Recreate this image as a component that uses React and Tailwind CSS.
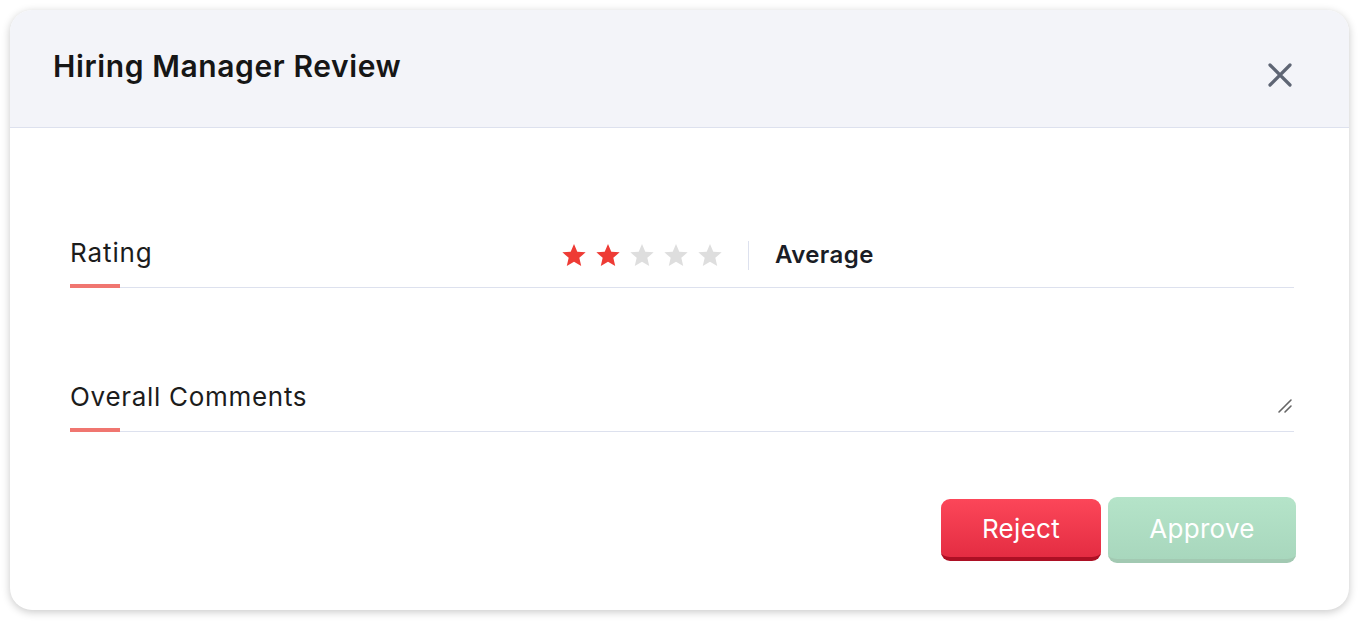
const Star = ({ filled }) => (
    <svg width="26" height="26" viewBox="0 0 24 24" className="shrink-0">
        <path
            d="M12 1.8l3.05 7.1 7.7.66-5.84 5.07 1.75 7.53L12 18.2l-6.66 3.96 1.75-7.53L1.25 9.56l7.7-.66z"
            fill={filled ? "#ee3b35" : "#dedede"}
        />
    </svg>
);

export default function App() {
    const rating = 2;

    return (
        <div className="w-[1363px] h-[624px] bg-white p-[10px] font-['Inter','Noto_Sans',sans-serif]">
            <div className="w-[1339px] h-[600px] bg-white rounded-[22px] shadow-[0_2px_8px_rgba(0,0,0,0.22)] overflow-hidden flex flex-col">
                {/* Header */}
                <div className="h-[118px] bg-[#f3f4f9] border-b border-[#dde1ee] flex items-start justify-between pl-[43px] pr-[56px]">
                    <h1 className="mt-[38px] text-[30px] leading-[36px] font-semibold text-[#161616] tracking-[0.6px]">
                        Hiring Manager Review
                    </h1>
                    <button className="mt-[52px] text-[#5e6574]" title="Close">
                        <svg width="26" height="26" viewBox="0 0 26 26">
                            <path d="M3 3L23 23M23 3L3 23" stroke="currentColor" strokeWidth="3.2" strokeLinecap="round" />
                        </svg>
                    </button>
                </div>

                {/* Body */}
                <div className="flex-1 flex flex-col pl-[60px] pr-[55px]">
                    {/* Rating */}
                    <div className="mt-[103px] relative h-[57px] pb-[14px] border-b border-[#dde1ee] flex items-center">
                        <span className="w-[491px] text-[26px] tracking-[0.9px] text-[#1c1c1c]">Rating</span>
                        <div className="flex items-center gap-[8px] pt-[6px]">
                            {[1, 2, 3, 4, 5].map((i) => (
                                <Star key={i} filled={i <= rating} />
                            ))}
                        </div>
                        <div className="ml-[25px] mt-[6px] w-px h-[29px] bg-[#dde1ee]" />
                        <span className="ml-[26px] pt-[6px] text-[24px] tracking-[0.4px] font-semibold text-[#1a1d26]">Average</span>
                        <div className="absolute left-0 bottom-[-1px] w-[50px] h-[4px] bg-[#f07670]" />
                    </div>

                    {/* Comments */}
                    <div className="mt-[87px] relative h-[57px] pb-[14px] border-b border-[#dde1ee] flex items-center justify-between">
                        <span className="text-[26px] tracking-[0.7px] text-[#1c1c1c]">Overall Comments</span>
                        <svg width="16" height="16" viewBox="0 0 16 16" className="mt-[20px] mr-[1px]">
                            <path d="M2 14L14 2M8 14L14 8" stroke="#666" strokeWidth="1.6" strokeLinecap="round" />
                        </svg>
                        <div className="absolute left-0 bottom-[-1px] w-[50px] h-[4px] bg-[#f07670]" />
                    </div>

                    {/* Actions */}
                    <div className="mt-[65px] flex items-center justify-end gap-[7px] mr-[-2px]">
                        <button className="w-[160px] h-[62px] rounded-[9px] bg-gradient-to-b from-[#fc4659] to-[#e42c42] border-b-[4px] border-[#ad1024] text-white text-[26px] tracking-[0.3px]">
                            Reject
                        </button>
                        <button className="w-[188px] h-[66px] rounded-[9px] bg-gradient-to-b from-[#b5e4c9] to-[#a8d7bd] border-b-[4px] border-[#a2c9b2] text-white text-[26px] tracking-[0.3px]">
                            Approve
                        </button>
                    </div>
                </div>
            </div>
        </div>
    );
}
